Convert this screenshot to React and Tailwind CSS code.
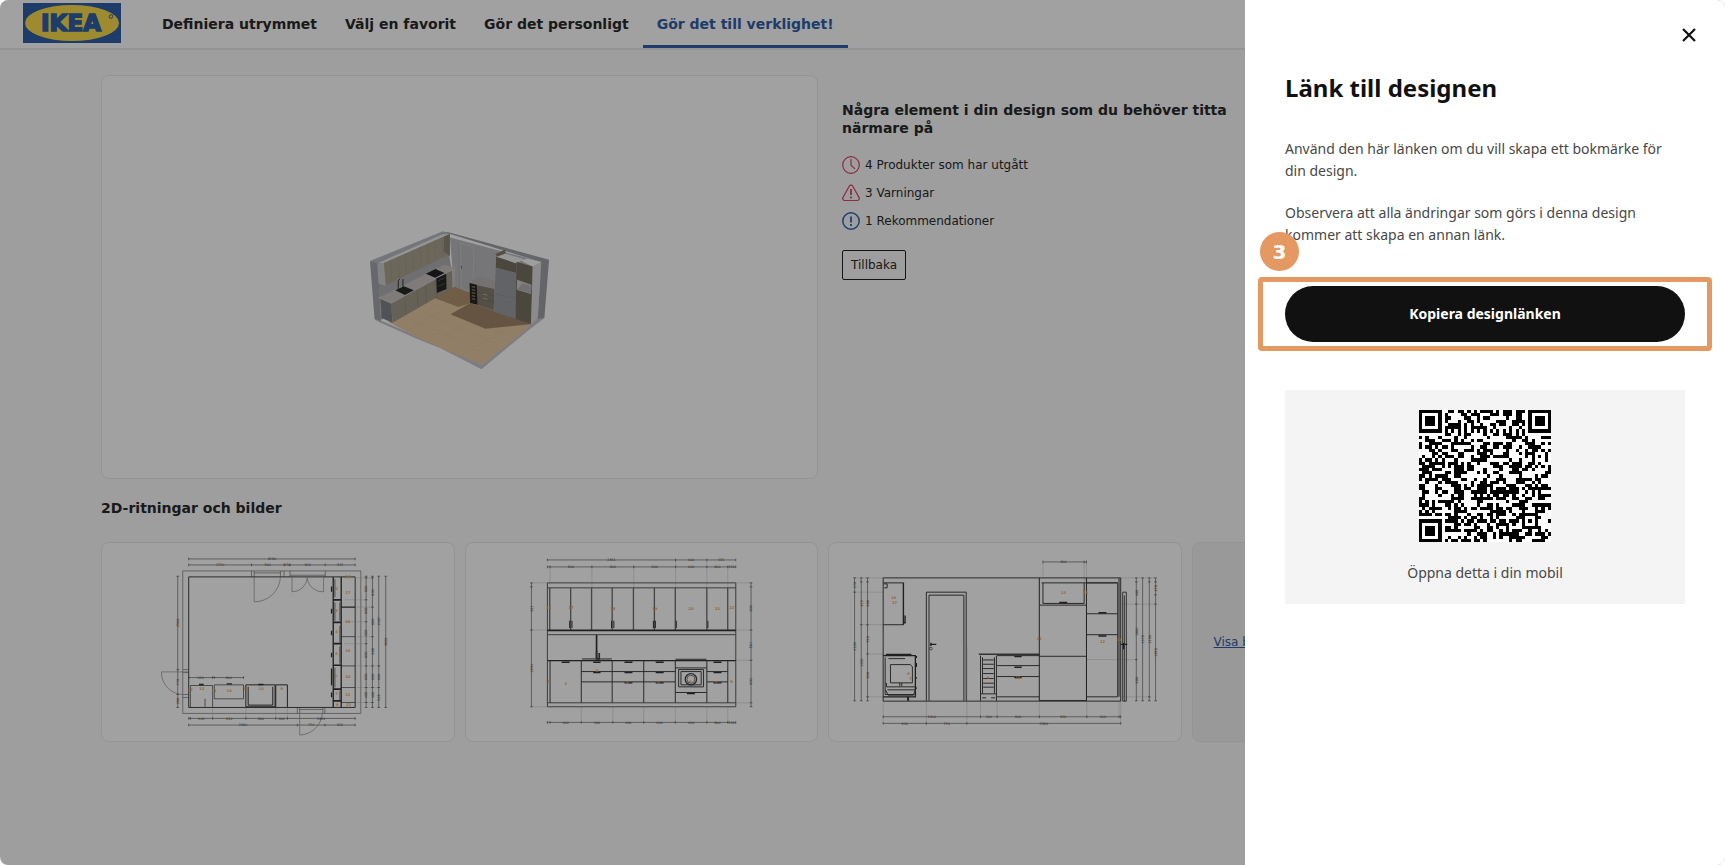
import { useState } from "react";

const STEPS = ["Definiera utrymmet", "Välj en favorit", "Gör det personligt", "Gör det till verklighet!"];

const QR_SIZE = 41;

function buildQr() {
  let seed = 20571;
  const next = () => {
    seed = (seed * 1103515245 + 12345) % 2147483648;
    return seed / 2147483648;
  };
  const ring = (x, y, cx, cy) => Math.max(Math.abs(x - cx), Math.abs(y - cy));
  const last = QR_SIZE - 4;
  let d = "";
  for (let y = 0; y < QR_SIZE; y++) {
    for (let x = 0; x < QR_SIZE; x++) {
      let dark = next() > 0.5;
      if (x === 6 || y === 6) dark = (x + y) % 2 === 0;
      [[3, 3], [last, 3], [3, last]].forEach(([cx, cy]) => {
        const r = ring(x, y, cx, cy);
        if (r <= 4) dark = r === 3 || r <= 1;
      });
      const a = ring(x, y, 34, 34);
      if (a <= 2) dark = a !== 1;
      if (dark) d += `M${x} ${y}h1v1h-1z`;
    }
  }
  return d;
}

const QR_PATH = buildQr();

function QrCode() {
  return (
    <svg viewBox="0 0 41 41" className="size-[132px] bg-white" shapeRendering="crispEdges" role="img" aria-label="QR-kod">
      <path d={QR_PATH} fill="#000" />
    </svg>
  );
}

function Logo() {
  return (
    <svg viewBox="0 0 98 40" className="h-10 w-[98px]" role="img" aria-label="IKEA">
      <rect width="98" height="40" fill="#2f60a8" />
      <ellipse cx="49" cy="20" rx="47" ry="18" fill="#fbdc4c" />
      <text
        x="48"
        y="28"
        textAnchor="middle"
        fontFamily="DejaVu Sans, sans-serif"
        fontWeight="700"
        fontSize="23"
        fill="#2f60a8"
        stroke="#2f60a8"
        strokeWidth="1.6"
      >
        IKEA
      </text>
      <circle cx="88" cy="13.5" r="1.8" fill="none" stroke="#2f60a8" />
    </svg>
  );
}

function ClockIcon() {
  return (
    <svg viewBox="0 0 18 18" className="size-[18px]" fill="none" stroke="#d8486a" strokeWidth="1.2">
      <circle cx="9" cy="9" r="8.3" />
      <path d="M9 3v6.3l4 3.6" />
    </svg>
  );
}

function WarningIcon() {
  return (
    <svg viewBox="0 0 18 18" className="size-[18px]" fill="none" stroke="#d8486a" strokeWidth="1.2">
      <path d="M7.2 2.2a2.1 2.1 0 0 1 3.6 0l6.3 11.4a2 2 0 0 1-1.8 2.9H2.7a2 2 0 0 1-1.8-2.9z" />
      <path d="M9 5v6M9 12.4v2" strokeWidth="1.8" />
    </svg>
  );
}

function InfoIcon() {
  return (
    <svg viewBox="0 0 18 18" className="size-[18px]" fill="none" stroke="#2f66b4">
      <circle cx="9" cy="9" r="8.2" strokeWidth="1.5" />
      <path d="M9 4.5v6M9 12v2" strokeWidth="1.8" />
    </svg>
  );
}

function KitchenScene() {
  const upper = [0, 1, 2, 3, 4, 5, 6, 7];
  return (
    <svg viewBox="-747 -420 2148 1209" className="h-auto w-full" role="img" aria-label="3D-vy av köket">
      {/* walls */}
      <path d="M80 140 285 52 312 215 92 312z" fill="#b0b0b4" />
      <path d="M58 136 275 47 300 54 82 142z" fill="#b9bcc3" />
      <path d="M275 47 280 60 572 138 560 310 310 216 298 60z" fill="#bcbcc0" />
      <path d="M275 47 297 50 596 132 572 139z" fill="#a0a2a8" />
      <path d="M58 136 82 141 92 322 72 311z" fill="#a3a5ab" />
      {/* floor */}
      <path d="M72 310 92 322 200 370 270 398 393 461 527 350 582 307 560 303 395 447 100 318z" fill="#c3c7cf" />
      <path d="M112 318 310 214 560 310 522 346 395 450 262 393 205 368z" fill="#e4c8a2" />
      <path
        d="M150 298 350 385M190 278 430 378M230 258 470 358M272 238 400 292M170 346 270 290M250 378 360 318M340 412 450 350"
        stroke="#dcbf98"
        strokeWidth="1.5"
      />
      <path d="M245 245 312 213 362 232 362 262 324 274z" fill="#b0946f" />
      <path d="M300 296 360 262 432 285 545 325 405 339z" fill="#9f8667" />
      {/* door */}
      <path d="M330 82 370 93 368 190 358 200 356 228 333 220z" fill="#b9b9bd" stroke="#cbcbce" strokeWidth="2" />
      <path d="M324 78 327 217" stroke="#acacb0" strokeWidth="2" />
      <path d="M333 150v9" stroke="#777" strokeWidth="3" />
      {/* wall cabinets */}
      <path d="M80 143 275 56 298 55 100 142z" fill="#eaeaea" />
      <path d="M80 143 100 142 106 210 84 204z" fill="#cfcfcf" />
      <path d="M100 142 298 55 298 120 276 126 106 209z" fill="#aca491" />
      {upper.map((i) => (
        <path key={i} d={`M${120 + i * 22} ${133 - i * 10}l4 ${66 - i}`} stroke="#958d7b" strokeWidth="1" />
      ))}
      <path d="M280 63 298 55 298 120 280 108z" fill="#8f8774" />
      {/* base cabinets */}
      <path d="M90 248 121 262 126 321 93 307z" fill="#808389" />
      <path d="M121 262 305 165 306 218 126 321z" fill="#a19a88" />
      <path d="M163 240 165 297M200 220 202 276M225 207 227 263M254 191 258 246" stroke="#898270" strokeWidth="1.5" />
      <path d="M84 246 280 147 314 156 122 263z" fill="#c8c3c1" />
      <path d="M84 246 122 263 314 157" fill="none" stroke="#dedad8" strokeWidth="2" />
      <path d="M134 224 160 212 190 224 163 238z" fill="#2a2a2a" />
      <path d="M143 222V195l5-5M157 214v-24" fill="none" stroke="#333" strokeWidth="3" />
      <path d="M226 174 255 160 282 172 254 186z" fill="#222" />
      <path d="M257 188 287 174 288 220 259 232z" fill="#262626" />
      <path d="M262 196 283 186M262 212 283 203" stroke="#666" strokeWidth="2" />
      <path d="M305 162 314 157 313 212 306 218z" fill="#ccc8c2" />
      {/* low cabinet with wine cooler */}
      <path d="M357 200 380 180 434 195 432 220z" fill="#b9b4b1" />
      <path d="M378 208 432 220 430 284 380 268z" fill="#857e6f" />
      <path d="M380 228 431 241M380 246 431 260" stroke="#6c6557" strokeWidth="1.5" />
      <path d="M397 235l14 3M397 248l14 3" stroke="#ccc" strokeWidth="2" />
      <path d="M357 202 379 207 381 267 359 262z" fill="#262626" />
      <path d="M364 213l10 2M364 222l10 2M364 231l10 2M364 240l10 2M364 249l10 2" stroke="#94745e" strokeWidth="4" />
      {/* tall units */}
      <path d="M435 115 464 101 466 112 440 124z" fill="#877e6c" />
      <path d="M439 123 466 114 520 130 498 144z" fill="#efefef" />
      <path d="M437 123 498 143 497 172 436 156z" fill="#787161" />
      <path d="M436 156 497 172 495 309 429 288z" fill="#9c9ea3" />
      <path d="M433 235 496 247" stroke="#85878b" strokeWidth="1.5" />
      <path d="M511 134 530 128 574 139 547 153z" fill="#fafafa" />
      <path d="M498 138 547 152 542 325 495 309z" fill="#787161" />
      <path d="M500 192 543 207 542 235 499 222z" fill="#d0d0d0" />
      <path d="M500 222 516 203 543 211 542 235z" fill="#b4b4b4" />
      <path d="M547 152 574 139 560 309 542 326z" fill="#dcdcdc" />
      <path d="M573 136 596 132 582 307 562 309z" fill="#9fa1a7" />
    </svg>
  );
}

// Dimension line along x: tick at every stop, value between the stops
function DimX({ y, stops, labels = [] }) {
  return (
    <g>
      <path d={`M${stops[0]} ${y}H${stops[stops.length - 1]}`} stroke="#444" strokeWidth="2" />
      {stops.map((x) => (
        <path key={x} d={`M${x} ${y - 4}v8`} stroke="#333" strokeWidth="2" />
      ))}
      {labels.map((t, i) =>
        t ? (
          <text key={i} x={(stops[i] + stops[i + 1]) / 2} y={y + 4} textAnchor="middle" fontSize="10" fill="#222">
            {t}
          </text>
        ) : null
      )}
    </g>
  );
}

function DimY({ x, stops, labels = [] }) {
  return (
    <g>
      <path d={`M${x} ${stops[0]}V${stops[stops.length - 1]}`} stroke="#444" strokeWidth="2" />
      {stops.map((y) => (
        <path key={y} d={`M${x - 4} ${y}h8`} stroke="#333" strokeWidth="2" />
      ))}
      {labels.map((t, i) => {
        const y = (stops[i] + stops[i + 1]) / 2;
        return t ? (
          <text key={i} x={x} y={y} transform={`rotate(-90 ${x} ${y})`} dy="4" textAnchor="middle" fontSize="10" fill="#222">
            {t}
          </text>
        ) : null;
      })}
    </g>
  );
}

function Marks({ items }) {
  return items.map(([x, y, t]) => (
    <text key={`${x}-${y}`} x={x} y={y + 4} textAnchor="middle" fontSize="11" fontWeight="700" fill="#e8963c">
      {t}
    </text>
  ));
}

function FloorPlan() {
  return (
    <svg viewBox="20 157 1058 595" className="h-auto w-full opacity-85" fill="none" stroke="#222" role="img" aria-label="Planritning">
      <g strokeWidth="2" stroke="#555">
        <path d="M263 241H799V670H263z" />
        <path d="M470 241v18M478 241v18M557 241v18M568 241v18M586 241v18M692 241v18M586 254h106M478 247h80" />
        <path d="M263 538h18M263 547h18M263 613h18M263 622h18M608 652v18M615 652v18M685 652v18M691 652v18M615 658h70" />
      </g>
      <path d="M281 259H782V652H281z" strokeWidth="3" />
      <g strokeWidth="2" stroke="#777">
        <path d="M478 259v75A78 78 0 0 0 557 259M592 259v45A46 46 0 0 0 638 262 46 46 0 0 0 687 304V259" />
        <path d="M281 545H199A66 66 0 0 0 263 613M615 670v65A70 70 0 0 0 683 670" />
      </g>
      {/* cabinet run on the right wall */}
      <g strokeWidth="4" stroke="#111">
        <path d="M740 259V652M716 259V652M740 350h42" strokeWidth="4" />
        <path d="M740 439h42M740 527h42M740 592h42M740 637h42" strokeWidth="2" />
        <path d="M716 328h24M716 396h24M716 460h24M716 525h24M716 597h24M716 632h24" strokeWidth="5" />
        <path d="M721 266v54M736 336v55M721 336v55M736 406v50M736 468v52M721 532v60M736 602v28" strokeWidth="2" />
        <path d="M711 288v16M711 355v14M711 421v14M711 487v14M711 535v50M711 607v14" strokeWidth="4" />
      </g>
      {/* bottom run */}
      <g strokeWidth="3" stroke="#111">
        <path d="M286 586h67v66M286 586v66M358 584h88v42h-88z" strokeWidth="2" />
        <path d="M453 584h88v66h-88zM460 590v55h74v-55" />
        <path d="M543 584h35v68M543 584v68" />
        <path d="M312 583h14M395 581h16M490 583h16" strokeWidth="4" />
        <path d="M330 626v24" strokeWidth="2" />
      </g>
      <path
        d="M750 262h80M750 328h65M782 350h55M750 394h65M782 439h55M750 460h65M782 527h75M782 592h75M782 637h55M353 652v32M453 652v32M543 652v32M578 652v32"
        stroke="#999"
        strokeWidth="1"
      />
      <g stroke="none">
        <DimX y={205} stops={[281, 782]} labels={["4580"]} />
        <DimX y={223} stops={[281, 470, 568, 586, 692, 782]} labels={["1720", "900", "170", "960", "815"]} />
        <DimX y={562} stops={[281, 353, 358, 446]} labels={["650", "", "800"]} />
        <DimX y={685} stops={[281, 286, 353, 453, 543, 578, 782]} labels={["", "600", "910", "800", "300", "1861"]} />
        <DimX y={705} stops={[281, 608, 691, 782]} labels={["2980", "770", "830"]} />
        <DimY x={248} stops={[257, 538, 613, 652]} labels={["2560", "770", "280"]} />
        <DimY x={815} stops={[257, 262, 328, 394, 460, 527, 592, 637, 652]} labels={["", "600", "600", "600", "600", "600", "400", ""]} />
        <DimY x={834} stops={[257, 262, 350, 439, 527, 592, 637, 652]} labels={["", "800", "800", "800", "600", "400", ""]} />
        <DimY x={853} stops={[257, 527, 592, 652]} labels={["2407", "600", "549"]} />
        <DimY x={874} stops={[257, 652]} labels={["3600"]} />
        <Marks
          items={[
            [760, 259, "16"], [760, 306, "17"], [760, 394, "18"], [760, 482, "19"], [760, 559, "20"], [760, 614, "21"], [762, 645, "22"],
            [726, 295, "2"], [726, 362, "3"], [726, 424, "4"], [726, 490, "5"], [724, 556, "6"], [726, 612, "7"], [728, 645, "8"],
            [286, 599, "12"], [320, 595, "13"], [357, 603, "11"], [403, 602, "14"], [453, 597, "15"], [499, 595, "10"], [561, 595, "9"],
          ]}
        />
      </g>
    </svg>
  );
}

function ElevationA() {
  return (
    <svg viewBox="15 22 1058 595" className="h-auto w-full opacity-85" fill="none" stroke="#222" role="img" aria-label="Vägg A">
      <path
        d="M268 90v57M394 90v67M520 90v67M646 73v84M740 73v84M803 90v67M362 515v48M457 515v48M550 515v48M645 515v48M740 515v48M803 515v48M212 142h48M212 284h48M212 515h48M827 142h47M827 284h47M827 375h47M827 503h47"
        stroke="#999"
        strokeWidth="1"
      />
      <path d="M260 142H827V515H260zM260 157H827M260 298H827M260 503H827" stroke="#444" strokeWidth="3" />
      {/* wall cabinets */}
      <path d="M267 157V284M330 157V284M393 157V284M455 157V284M519 157V284M582 157V284M645 157V284" stroke="#555" strokeWidth="4" />
      <path d="M740 157V284M803 157V284" strokeWidth="3" />
      <path d="M260 285H827" stroke="#111" strokeWidth="5" />
      <path d="M327 256v22M334 256v22M453 256v22M460 256v22M579 256v22M585 256v22M648 256v22M743 256v22" stroke="#111" strokeWidth="3" />
      {/* tap */}
      <path d="M408 298v72" stroke="#111" strokeWidth="5" />
      <path d="M408 346v25h8v-18" stroke="#222" strokeWidth="5" />
      {/* base cabinets */}
      <path d="M260 376H827" stroke="#111" strokeWidth="4" />
      <path d="M364 371h90M646 372h93" strokeWidth="3" />
      <path d="M268 376V503M362 376V503M455 376V503M550 376V503M645 376V503M740 376V503M803 376V503" strokeWidth="3" />
      <path d="M362 409H645M362 440H645M740 409h63M740 440h63M645 398h95M645 472h95" strokeWidth="3" />
      <path
        d="M303 381h24M398 381h22M492 381h24M586 381h24M760 381h24M398 412h22M492 412h24M586 412h24M760 412h24M492 443h24M586 443h24M760 443h24M680 475h24"
        stroke="#111"
        strokeWidth="4"
      />
      <path d="M655 403h75v52h-75zM662 409h61v40h-61z" strokeWidth="3" />
      <circle cx="692" cy="432" r="17" strokeWidth="4" />
      <circle cx="692" cy="432" r="12" strokeWidth="2" />
      <g stroke="none">
        <DimX y={73} stops={[260, 646, 740, 827]} labels={["2451", "600", "555"]} />
        <DimX y={94} stops={[260, 268, 394, 520, 646, 740, 803, 827]} labels={["", "800", "800", "800", "600", "400", "150"]} />
        <DimX y={562} stops={[260, 268, 362, 457, 550, 645, 740, 803, 827]} labels={["", "600", "600", "600", "600", "600", "400", "150"]} />
        <DimY x={212} stops={[142, 154, 284, 515]} labels={["", "821", "1504"]} />
        <DimY x={873} stops={[142, 154, 284, 375, 503, 515]} labels={["", "800", "581", "800", ""]} />
        <Marks
          items={[
            [264, 218, "16"], [331, 218, "17"], [457, 219, "18"], [583, 219, "19"], [692, 219, "20"], [772, 219, "21"], [815, 218, "22"],
            [264, 439, "1"], [315, 444, "2"], [409, 406, "3"], [500, 443, "4"], [594, 443, "5"], [690, 440, "6"], [767, 443, "7"], [814, 438, "8"],
          ]}
        />
      </g>
    </svg>
  );
}

function ElevationB() {
  return (
    <svg viewBox="24 22 1058 595" className="h-auto w-full opacity-85" fill="none" stroke="#222" role="img" aria-label="Vägg B">
      <path
        d="M668 79v48M792 79v60M799 79v48M101 127h86M101 170h86M121 268h66M140 356h47M140 485h47M902 127h105M902 206h105M902 373h47M902 485h85M187 497v68M317 497v68M439 335v230M480 497v48M530 497v48M657 497v48M800 497v48M897 497v48M902 497v68M799 373h103"
        stroke="#999"
        strokeWidth="1"
      />
      <path d="M187 127H902V498H187z" strokeWidth="3" />
      {/* wall cabinet and oven side view */}
      <path d="M187 142h61v126h-61M190 145h9v12h-9" strokeWidth="3" />
      <path d="M248 142V268M253 240v22h-5" stroke="#111" strokeWidth="4" />
      <path d="M195 357h77M187 361h97v124h-97" stroke="#111" strokeWidth="4" />
      <path d="M193 366v112h88M209 388v55h66v-48l-6-7h-55zM203 370h50M200 464h84l-6 16h-76l-8-16M197 443v12h86M237 443v10M243 443v10" strokeWidth="3" />
      <path d="M286 362v6M286 383v12M286 426v4M286 457v4M262 485v12" stroke="#111" strokeWidth="6" />
      {/* door */}
      <path d="M317 497V170H437V497M325 497V179H430V497" strokeWidth="3" />
      <path d="M328 327h19M331 322v10" stroke="#111" strokeWidth="4" />
      <circle cx="331" cy="340" r="4" strokeWidth="2" />
      {/* wine cooler and drawers */}
      <path d="M475 357H657" strokeWidth="5" stroke="#333" />
      <path d="M480 361V497M528 361V497M486 366V475M522 366V475" strokeWidth="3" />
      <path d="M488 374h32M488 387h32M488 400h32M488 415h32M488 430h32M488 444h32M488 456h32M480 476h48M485 488h12M512 488h12" strokeWidth="3" />
      <path d="M530 361H657M530 391H657M530 424H657M530 485H657" strokeWidth="3" />
      <path d="M582 364h22M582 396h22M582 427h22" stroke="#111" strokeWidth="4" />
      {/* fridge and tall unit */}
      <path d="M657 127V497M799 127V497" stroke="#111" strokeWidth="3" />
      <path d="M664 142H893M668 142v62H792V142M657 209H799M657 363H799M657 496H799" strokeWidth="3" />
      <path d="M800 142H893V485H800M800 235H893M800 298H893M897 127V485" strokeWidth="3" />
      <path d="M717 201h24M835 232h24M835 302h24" stroke="#111" strokeWidth="4" />
      <path d="M908 170h11V498h-11zM913 180V498" strokeWidth="3" stroke="#333" />
      <path d="M902 327h20M911 322v20" stroke="#111" strokeWidth="4" />
      <g stroke="none">
        <DimX y={79} stops={[668, 792, 799]} labels={["800", ""]} />
        <DimX y={545} stops={[187, 480, 530, 657, 800, 897, 902]} labels={["1860", "300", "800", "910", "600", ""]} />
        <DimX y={565} stops={[187, 317, 439, 902]} labels={["830", "770", "2980"]} />
        <DimY x={101} stops={[127, 170, 497]} labels={["270", "2100"]} />
        <DimY x={121} stops={[127, 139, 268, 497]} labels={["", "815", "1450"]} />
        <DimY x={140} stops={[127, 139, 268, 356, 485, 497]} labels={["", "800", "550", "800", ""]} />
        <DimY x={949} stops={[127, 139, 206, 373, 497]} labels={["", "400", "1060", "800"]} />
        <DimY x={968} stops={[127, 497]} labels={["2370"]} />
        <DimY x={988} stops={[127, 139, 485, 497]} labels={["", "2200", ""]} />
        <DimY x={1007} stops={[127, 139, 178, 206, 497]} labels={["", "270", "", "1850"]} />
        <Marks
          items={[
            [219, 186, "16"], [221, 202, "17"], [263, 416, "6"], [269, 430, "7"], [503, 427, "9"], [592, 427, "10"],
            [657, 311, "11"], [730, 173, "13"], [796, 173, "15"], [847, 319, "12"], [898, 312, "14"],
          ]}
        />
      </g>
    </svg>
  );
}

const NOTICES = [
  { icon: ClockIcon, text: "4 Produkter som har utgått" },
  { icon: WarningIcon, text: "3 Varningar" },
  { icon: InfoIcon, text: "1 Rekommendationer" },
];

const DRAWINGS = [FloorPlan, ElevationA, ElevationB];

function SharePanel({ onClose }) {
  return (
    <aside className="fixed inset-y-0 right-0 flex w-[480px] flex-col rounded-r-lg bg-white px-10 font-['Noto_Sans',sans-serif] text-[#484848]">
      <button type="button" aria-label="Stäng" onClick={onClose} className="mt-[23px] -mr-4 flex size-6 items-center justify-center self-end">
        <svg viewBox="0 0 14 14" className="size-3.5" stroke="#111" strokeWidth="2.2">
          <path d="M1 1l12 12M13 1L1 13" />
        </svg>
      </button>
      <h2 className="mt-[23px] text-2xl leading-9 font-bold text-[#111]">Länk till designen</h2>
      <div className="mt-8 space-y-5 text-sm leading-[22px]">
        <p>Använd den här länken om du vill skapa ett bokmärke för din design.</p>
        <p>Observera att alla ändringar som görs i denna design kommer att skapa en annan länk.</p>
      </div>

      <div className="relative -mx-[27px] mt-[31px] rounded border-5 border-[#e49963] px-[22px] py-1">
        <button type="button" className="h-14 w-full rounded-full bg-[#111] text-sm font-bold text-white">
          Kopiera designlänken
        </button>
        <span className="absolute -top-[50px] -left-[3px] flex size-[39px] items-center justify-center rounded-full bg-[#e49963] font-['DejaVu_Sans',sans-serif] text-xl font-bold text-white">
          3
        </span>
      </div>

      <div className="mt-[39px] flex flex-col items-center bg-[#f4f4f4] pt-5 pb-5 text-sm leading-[22px]">
        <QrCode />
        <p className="mt-5">Öppna detta i din mobil</p>
      </div>
    </aside>
  );
}

export default function App() {
  const [panelOpen, setPanelOpen] = useState(true);

  return (
    <div className="min-h-screen overflow-hidden rounded-lg bg-[#fafafa] font-['DejaVu_Sans',sans-serif] text-[#2a2a2a]">
      <header className="flex h-[50px] items-stretch border-b-2 border-[#ebebeb] bg-white pl-[23px]">
        <div className="pt-[3px]">
          <Logo />
        </div>
        <nav className="ml-[27px] flex">
          {STEPS.map((step, i) => (
            <a
              key={step}
              href="#"
              className={`flex items-center border-b-3 px-3.5 pt-0.5 text-sm font-bold whitespace-nowrap ${
                i === STEPS.length - 1 ? "border-[#2f60a8] text-[#2f60a8]" : "border-transparent"
              }`}
            >
              {step}
            </a>
          ))}
        </nav>
      </header>

      <main className="pt-[25px] pr-[180px] pl-[101px]">
        <section className="grid grid-cols-2 gap-2.5">
          <div className="overflow-hidden rounded-lg border border-[#ebebeb] bg-white">
            <KitchenScene />
          </div>
          <div className="max-w-[410px] pt-[26px] pl-3.5">
            <h2 className="text-sm leading-[18px] font-bold">Några element i din design som du behöver titta närmare på</h2>
            <ul className="mt-[19px] space-y-2.5 text-xs leading-[18px]">
              {NOTICES.map(({ icon: Icon, text }) => (
                <li key={text} className="flex items-center gap-[5px]">
                  <Icon />
                  {text}
                </li>
              ))}
            </ul>
            <button type="button" className="mt-5 h-[30px] rounded-xs border border-[#222] px-2 text-xs">
              Tillbaka
            </button>
          </div>
        </section>

        <h2 className="mt-5 text-sm leading-[18px] font-bold">2D-ritningar och bilder</h2>
        <section className="mt-[25px] grid grid-cols-4 gap-2.5">
          {DRAWINGS.map((Drawing, i) => (
            <div key={i} className="overflow-hidden rounded-lg border border-[#ebebeb] bg-white">
              <Drawing />
            </div>
          ))}
          <div className="flex items-center rounded-lg border border-[#ebebeb] bg-[#f3f3f3] pl-[21px]">
            <a href="#" className="text-xs text-[#2f60a8] underline">
              Visa bilder
            </a>
          </div>
        </section>
      </main>

      {panelOpen && (
        <>
          <div className="fixed inset-0 rounded-lg bg-black/37" />
          <SharePanel onClose={() => setPanelOpen(false)} />
        </>
      )}
    </div>
  );
}
